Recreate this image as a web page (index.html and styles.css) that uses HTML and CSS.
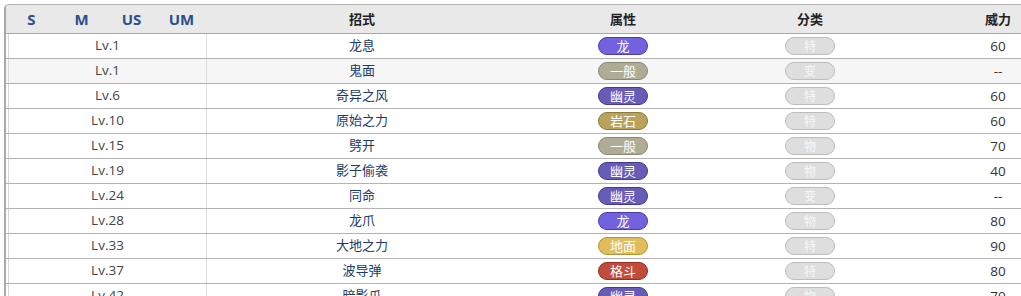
FILE: index.html
```html
<!DOCTYPE html>
<html lang="zh">
<head>
<meta charset="utf-8">
<link rel="stylesheet" href="styles.css">
</head>
<body>
<div class="viewport">
  <div class="table">
    <div class="head">
      <div class="games"><span>S</span><span>M</span><span>US</span><span>UM</span></div>
      <div class="hc">招式</div>
      <div class="hc">属性</div>
      <div class="hc">分类</div>
      <div class="hc">威力</div>
    </div>
    <div class="row"><div class="lv">Lv.1</div><div class="name">龙息</div><div class="c"><span class="type dragon">龙</span></div><div class="c"><span class="cat">特</span></div><div class="c pow">60</div></div>
    <div class="row alt"><div class="lv">Lv.1</div><div class="name">鬼面</div><div class="c"><span class="type normal">一般</span></div><div class="c"><span class="cat">变</span></div><div class="c pow">--</div></div>
    <div class="row"><div class="lv">Lv.6</div><div class="name">奇异之风</div><div class="c"><span class="type ghost">幽灵</span></div><div class="c"><span class="cat">特</span></div><div class="c pow">60</div></div>
    <div class="row"><div class="lv">Lv.10</div><div class="name">原始之力</div><div class="c"><span class="type rock">岩石</span></div><div class="c"><span class="cat">特</span></div><div class="c pow">60</div></div>
    <div class="row"><div class="lv">Lv.15</div><div class="name">劈开</div><div class="c"><span class="type normal">一般</span></div><div class="c"><span class="cat">物</span></div><div class="c pow">70</div></div>
    <div class="row"><div class="lv">Lv.19</div><div class="name">影子偷袭</div><div class="c"><span class="type ghost">幽灵</span></div><div class="c"><span class="cat">物</span></div><div class="c pow">40</div></div>
    <div class="row"><div class="lv">Lv.24</div><div class="name">同命</div><div class="c"><span class="type ghost">幽灵</span></div><div class="c"><span class="cat">变</span></div><div class="c pow">--</div></div>
    <div class="row"><div class="lv">Lv.28</div><div class="name">龙爪</div><div class="c"><span class="type dragon">龙</span></div><div class="c"><span class="cat">物</span></div><div class="c pow">80</div></div>
    <div class="row"><div class="lv">Lv.33</div><div class="name">大地之力</div><div class="c"><span class="type ground">地面</span></div><div class="c"><span class="cat">特</span></div><div class="c pow">90</div></div>
    <div class="row"><div class="lv">Lv.37</div><div class="name">波导弹</div><div class="c"><span class="type fighting">格斗</span></div><div class="c"><span class="cat">特</span></div><div class="c pow">80</div></div>
    <div class="row"><div class="lv">Lv.42</div><div class="name">暗影爪</div><div class="c"><span class="type ghost">幽灵</span></div><div class="c"><span class="cat">物</span></div><div class="c pow">70</div></div>
  </div>
</div>
</body>
</html>
```

FILE: styles.css
```css
html, body {
  margin: 0;
  padding: 0;
  background: #fff;
  overflow: hidden;
}
.viewport {
  width: 1021px;
  height: 296px;
  overflow: hidden;
}
.table {
  margin: 4px 0 0 4px;
  width: 1200px;
  border-top: 1px solid #b4b4b4;
  border-left: 2px solid #a9a9a9;
  border-top-left-radius: 5px;
  font-family: "Open Sans", "Noto Sans CJK SC", sans-serif;
  font-size: 13px;
}
.head {
  display: grid;
  grid-template-columns: 201px 310px 212px 162px 214px 1fr;
  height: 28px;
  background: #e9e9e9;
  border-bottom: 1px solid #a8a8a8;
  align-items: center;
  border-top-left-radius: 4px;
}
.games {
  display: grid;
  grid-template-columns: repeat(4, 50px);
  color: #2b4f8c;
  font-weight: bold;
  font-size: 15px;
  font-family: "Open Sans", sans-serif;
}
.games span {
  text-align: center;
  margin-left: 1px;
}
.hc {
  text-align: center;
  font-family: "Noto Sans CJK SC", sans-serif;
  font-weight: bold;
  color: #222;
  font-size: 13px;
  padding-bottom: 2px;
}
.row {
  display: grid;
  grid-template-columns: 201px 310px 212px 162px 214px 1fr;
  height: 24px;
  border-bottom: 1px solid #b3b3b3;
  align-items: center;
  background: #fff;
}
.row.alt {
  background: #f6f6f6;
}
.lv {
  height: 24px;
  line-height: 23px;
  margin-left: 2px;
  border-left: 1px solid #d8d8d8;
  border-right: 1px solid #dcdcdc;
  text-align: center;
  color: #444;
  font-size: 13.5px;
  background: #fff;
}
.row.alt .lv {
  background: #f6f6f6;
}
.name {
  text-align: center;
  color: #1e3a66;
  font-family: "Noto Sans CJK SC", sans-serif;
  font-size: 13px;
  padding-bottom: 3px;
}
.c {
  display: flex;
  justify-content: center;
  align-items: center;
}
.pow {
  color: #333;
  font-size: 13.5px;
  padding-bottom: 1px;
}
.type, .cat {
  display: inline-flex;
  justify-content: center;
  align-items: center;
  width: 48px;
  height: 15px;
  border-radius: 9px;
  border: 1px solid;
  color: #fff;
  font-family: "Noto Sans CJK SC", sans-serif;
  font-size: 13px;
  line-height: 15px;
  padding-bottom: 1px;
  box-sizing: content-box;
}
.cat {
  background: #dedede;
  border-color: #bdbdbd;
  color: #f7f7f7;
  font-size: 12px;
}
.dragon { background: #7262de; border-color: #4a3ca6; }
.normal { background: #aeac95; border-color: #8a8872; }
.ghost { background: #675cb6; border-color: #443a8c; }
.rock { background: #b9a25c; border-color: #8e7a3a; }
.ground { background: #dfbd5c; border-color: #b49636; }
.fighting { background: #c24c3a; border-color: #902f22; }
```
